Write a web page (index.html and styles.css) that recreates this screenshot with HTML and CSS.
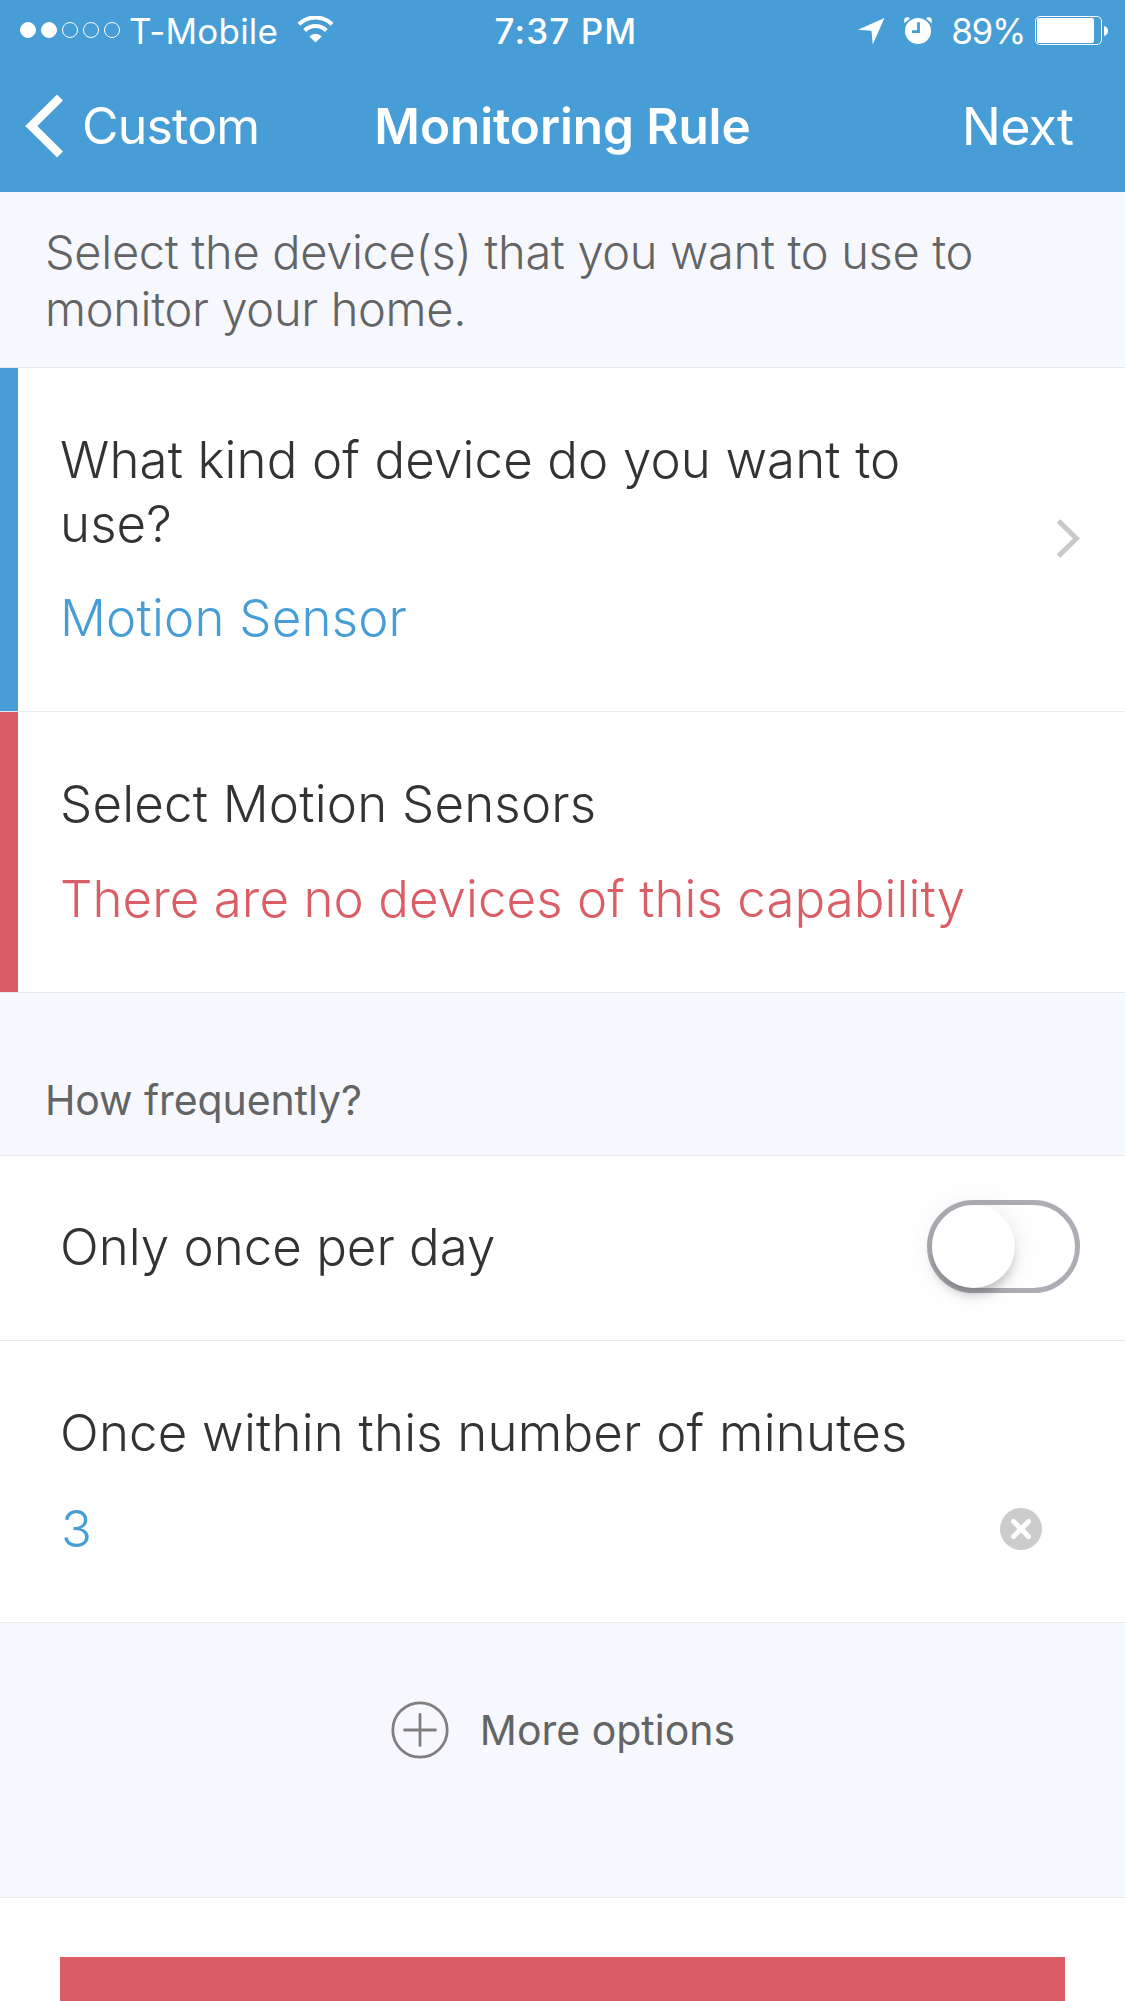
FILE: index.html
```html
<!DOCTYPE html>
<html lang="en">
<head>
  <meta charset="UTF-8" />
  <meta name="viewport" content="width=device-width, initial-scale=1.0" />
  <title>Monitoring Rule</title>
  <link rel="stylesheet" href="styles.css">
</head>
<body>
  <header class="topbar">
    <div class="status">
      <div class="status-left">
        <div class="signal">
          <i class="dot full"></i><i class="dot full"></i><i class="dot"></i><i class="dot"></i><i class="dot"></i>
        </div>
        <span class="carrier">T-Mobile</span>
        <svg class="wifi" width="37" height="27" viewBox="0 0 38 28" fill="none" stroke="#fff">
          <path d="M1.8 8.6 A24.5 24.5 0 0 1 36.2 8.6" stroke-width="4.2"/>
          <path d="M7.8 15 A16 16 0 0 1 30.2 15" stroke-width="4.2"/>
          <path d="M19 27.6 L12.6 21.2 A9 9 0 0 1 25.4 21.2 Z" fill="#fff" stroke="none"/>
        </svg>
      </div>
      <span class="clock">7:37 PM</span>
      <div class="status-right">
        <svg class="location" width="28" height="28" viewBox="0 0 28 28" fill="#fff">
          <path d="M27.5 1 L1 12.8 L14.5 13.8 L15.7 27.5 Z"/>
        </svg>
        <svg class="alarm" width="28" height="28" viewBox="0 0 28 28">
          <circle cx="14" cy="14" r="13" fill="#fff"/>
          <path d="M0.2 6.2 V3.4 A3.2 3.2 0 0 1 3.4 0.2 H4.6 L6 1.4 Z M27.8 6.2 V3.4 A3.2 3.2 0 0 0 24.6 0.2 H23.4 L22 1.4 Z" fill="#fff"/>
          <path d="M14.5 5.2 V14.6 H8" fill="none" stroke="#479dd6" stroke-width="2.8"/>
        </svg>
        <span class="percent">89%</span>
        <svg class="battery" width="73" height="29" viewBox="0 0 73 29">
          <rect x="0.5" y="0.5" width="66" height="28" rx="4.5" fill="none" stroke="#fff"/>
          <rect x="2" y="2" width="57" height="25" rx="2" fill="#fff"/>
          <path d="M69 10 C71.6 10.6 73 12.4 73 15 S71.6 19.4 69 20 Z" fill="#fff"/>
        </svg>
      </div>
    </div>
    <nav class="nav">
      <a class="back">
        <svg width="39" height="64" viewBox="0 0 39 64" fill="none" stroke="#fff" stroke-width="8.5">
          <path d="M35 3.5 L6.3 32 L35 60.5"/>
        </svg>
        <span>Custom</span>
      </a>
      <h1 class="nav-title">Monitoring Rule</h1>
      <a class="next">Next</a>
    </nav>
  </header>

  <main>
    <p class="intro">Select the device(s) that you want to use to monitor your home.</p>

    <section class="row blue">
      <div class="row-text">
        <div class="label">What kind of device do you want to use?</div>
        <div class="value">Motion Sensor</div>
      </div>
      <svg class="chevron" width="24" height="40" viewBox="0 0 24 40" fill="none" stroke="#c7c7cc" stroke-width="5">
        <path d="M2.5 2 L20.5 19.5 L2.5 37"/>
      </svg>
    </section>

    <section class="row red">
      <div class="row-text">
        <div class="label">Select Motion Sensors</div>
        <div class="value">There are no devices of this capability</div>
      </div>
    </section>

    <h2 class="group-title">How frequently?</h2>

    <section class="row single">
      <div class="label">Only once per day</div>
      <div class="toggle"><div class="knob"></div></div>
    </section>

    <section class="row minutes">
      <div class="row-text">
        <div class="label">Once within this number of minutes</div>
        <div class="value with-clear">
          <span>3</span>
          <svg width="42" height="42" viewBox="0 0 42 42">
            <circle cx="21" cy="21" r="21" fill="#ccc"/>
            <path d="M13.5 13.5 L28.5 28.5 M28.5 13.5 L13.5 28.5" stroke="#fff" stroke-width="5" stroke-linecap="round"/>
          </svg>
        </div>
      </div>
    </section>

    <div class="more">
      <svg width="58" height="58" viewBox="0 0 58 58" fill="none" stroke="#808080" stroke-width="2.8" stroke-linecap="round">
        <circle cx="29" cy="29" r="27.2"/>
        <path d="M29 13.5 V44.5 M13.5 29 H44.5"/>
      </svg>
      <span>More options</span>
    </div>

    <div class="actions"><div class="remove"></div></div>
  </main>
</body>
</html>
```
FILE: styles.css
```css
* { margin: 0; padding: 0; box-sizing: border-box; }
body {
  font-family: Inter, "Liberation Sans", sans-serif;
  background: #fff;
  color: #333;
  height: 2001px;
  overflow: hidden;
}
svg { display: block; flex: none; }
.topbar {
  height: 192px;
  background: #479dd6;
  color: #fff;
}
.status {
  display: grid;
  grid-template-columns: 1fr auto 1fr;
  height: 60px;
  padding: 0 17px 0 20px;
  line-height: 62px;
  font-size: 35px;
}
.status-left, .status-right {
  display: flex;
  align-items: flex-start;
}
.status-right { justify-content: flex-end; }
.signal {
  display: flex;
  gap: 5px;
  padding-top: 22px;
}
.dot {
  width: 16px;
  height: 16px;
  border: 1px solid #fff;
  border-radius: 50%;
}
.dot.full { background: #fff; }
.carrier {
  margin-left: 9px;
  letter-spacing: 0.2px;
}
.wifi { margin: 16px 0 0 19px; }
.clock {
  padding-left: 4px;
  font-weight: 500;
  letter-spacing: 1.1px;
}
.location { margin: 17px 19px 0 0; }
.alarm { margin: 17px 19px 0 0; }
.percent { letter-spacing: -1.3px; }
.battery { margin: 16px 0 0 10px; }
.nav {
  display: grid;
  grid-template-columns: 1fr auto 1fr;
  align-items: center;
  height: 132px;
  font-size: 50px;
}
.back {
  display: flex;
  align-items: center;
  gap: 18px;
  padding-left: 25px;
  letter-spacing: -0.8px;
}
.nav-title {
  font-size: 49.5px;
  font-weight: 600;
  letter-spacing: -0.1px;
}
.next {
  padding-right: 52px;
  font-size: 52px;
  letter-spacing: -0.9px;
  text-align: right;
}

.intro {
  height: 176px;
  padding: 31px 100px 0 45px;
  background: #f7f8fd;
  border-bottom: 1px solid #e9eaee;
  color: #636466;
  font-size: 47px;
  font-weight: 300;
  line-height: 57px;
  letter-spacing: -0.33px;
}
.row {
  display: flex;
  align-items: center;
  justify-content: space-between;
  padding: 60px 45px 60px 60px;
  border-bottom: 1px solid #e9eaee;
  font-size: 51px;
  font-weight: 300;
  line-height: 64px;
  letter-spacing: 0.2px;
}
/* coloured strip on the left edge shows the state of the input */
.row.blue {
  padding-bottom: 61px;
  box-shadow: inset 18px 0 #479dd6;
}
.row.blue .label { letter-spacing: 0.12px; }
.row.red {
  padding-bottom: 61px;
  box-shadow: inset 18px 0 #da5e66;
}
.row-text { flex: 1; }
.row.blue .row-text { padding-right: 100px; }
.value {
  margin-top: 32px;
  color: #479dd6;
}
.row.blue .value { margin-top: 30px; }
.row.red .value {
  margin-top: 31px;
  color: #da5e66;
  letter-spacing: 0.06px;
}
.group-title {
  height: 163px;
  padding: 82px 45px 0;
  background: #f7f8fd;
  border-bottom: 1px solid #e9eaee;
  color: #636466;
  font-size: 41px;
  font-weight: 400;
  line-height: 50px;
  letter-spacing: -0.1px;
}
.row.single {
  height: 185px;
  padding-top: 0;
  padding-bottom: 3px;
  letter-spacing: 0;
}
.row.minutes { padding-bottom: 61px; }
.toggle {
  width: 153px;
  height: 93px;
  border: 5px solid #adadb3;
  border-radius: 47px;
}
.knob {
  width: 83px;
  height: 83px;
  background: #fff;
  border-radius: 50%;
  box-shadow: 0 9px 12px -3px rgba(0,0,0,0.25), 0 0 34px rgba(0,0,0,0.08);
}
.with-clear {
  display: flex;
  align-items: center;
  justify-content: space-between;
  padding-right: 38px;
}
.with-clear span { padding-left: 1px; }
.more {
  display: flex;
  justify-content: center;
  gap: 31px;
  height: 275px;
  padding: 78px 0 0 1px;
  background: #f7f8fd;
  border-bottom: 1px solid #e9eaee;
  color: #636466;
  font-size: 41px;
  line-height: 58px;
}
.actions { padding: 59px 60px 0; }
.remove {
  height: 44px;
  background: #da5e66;
}
```
